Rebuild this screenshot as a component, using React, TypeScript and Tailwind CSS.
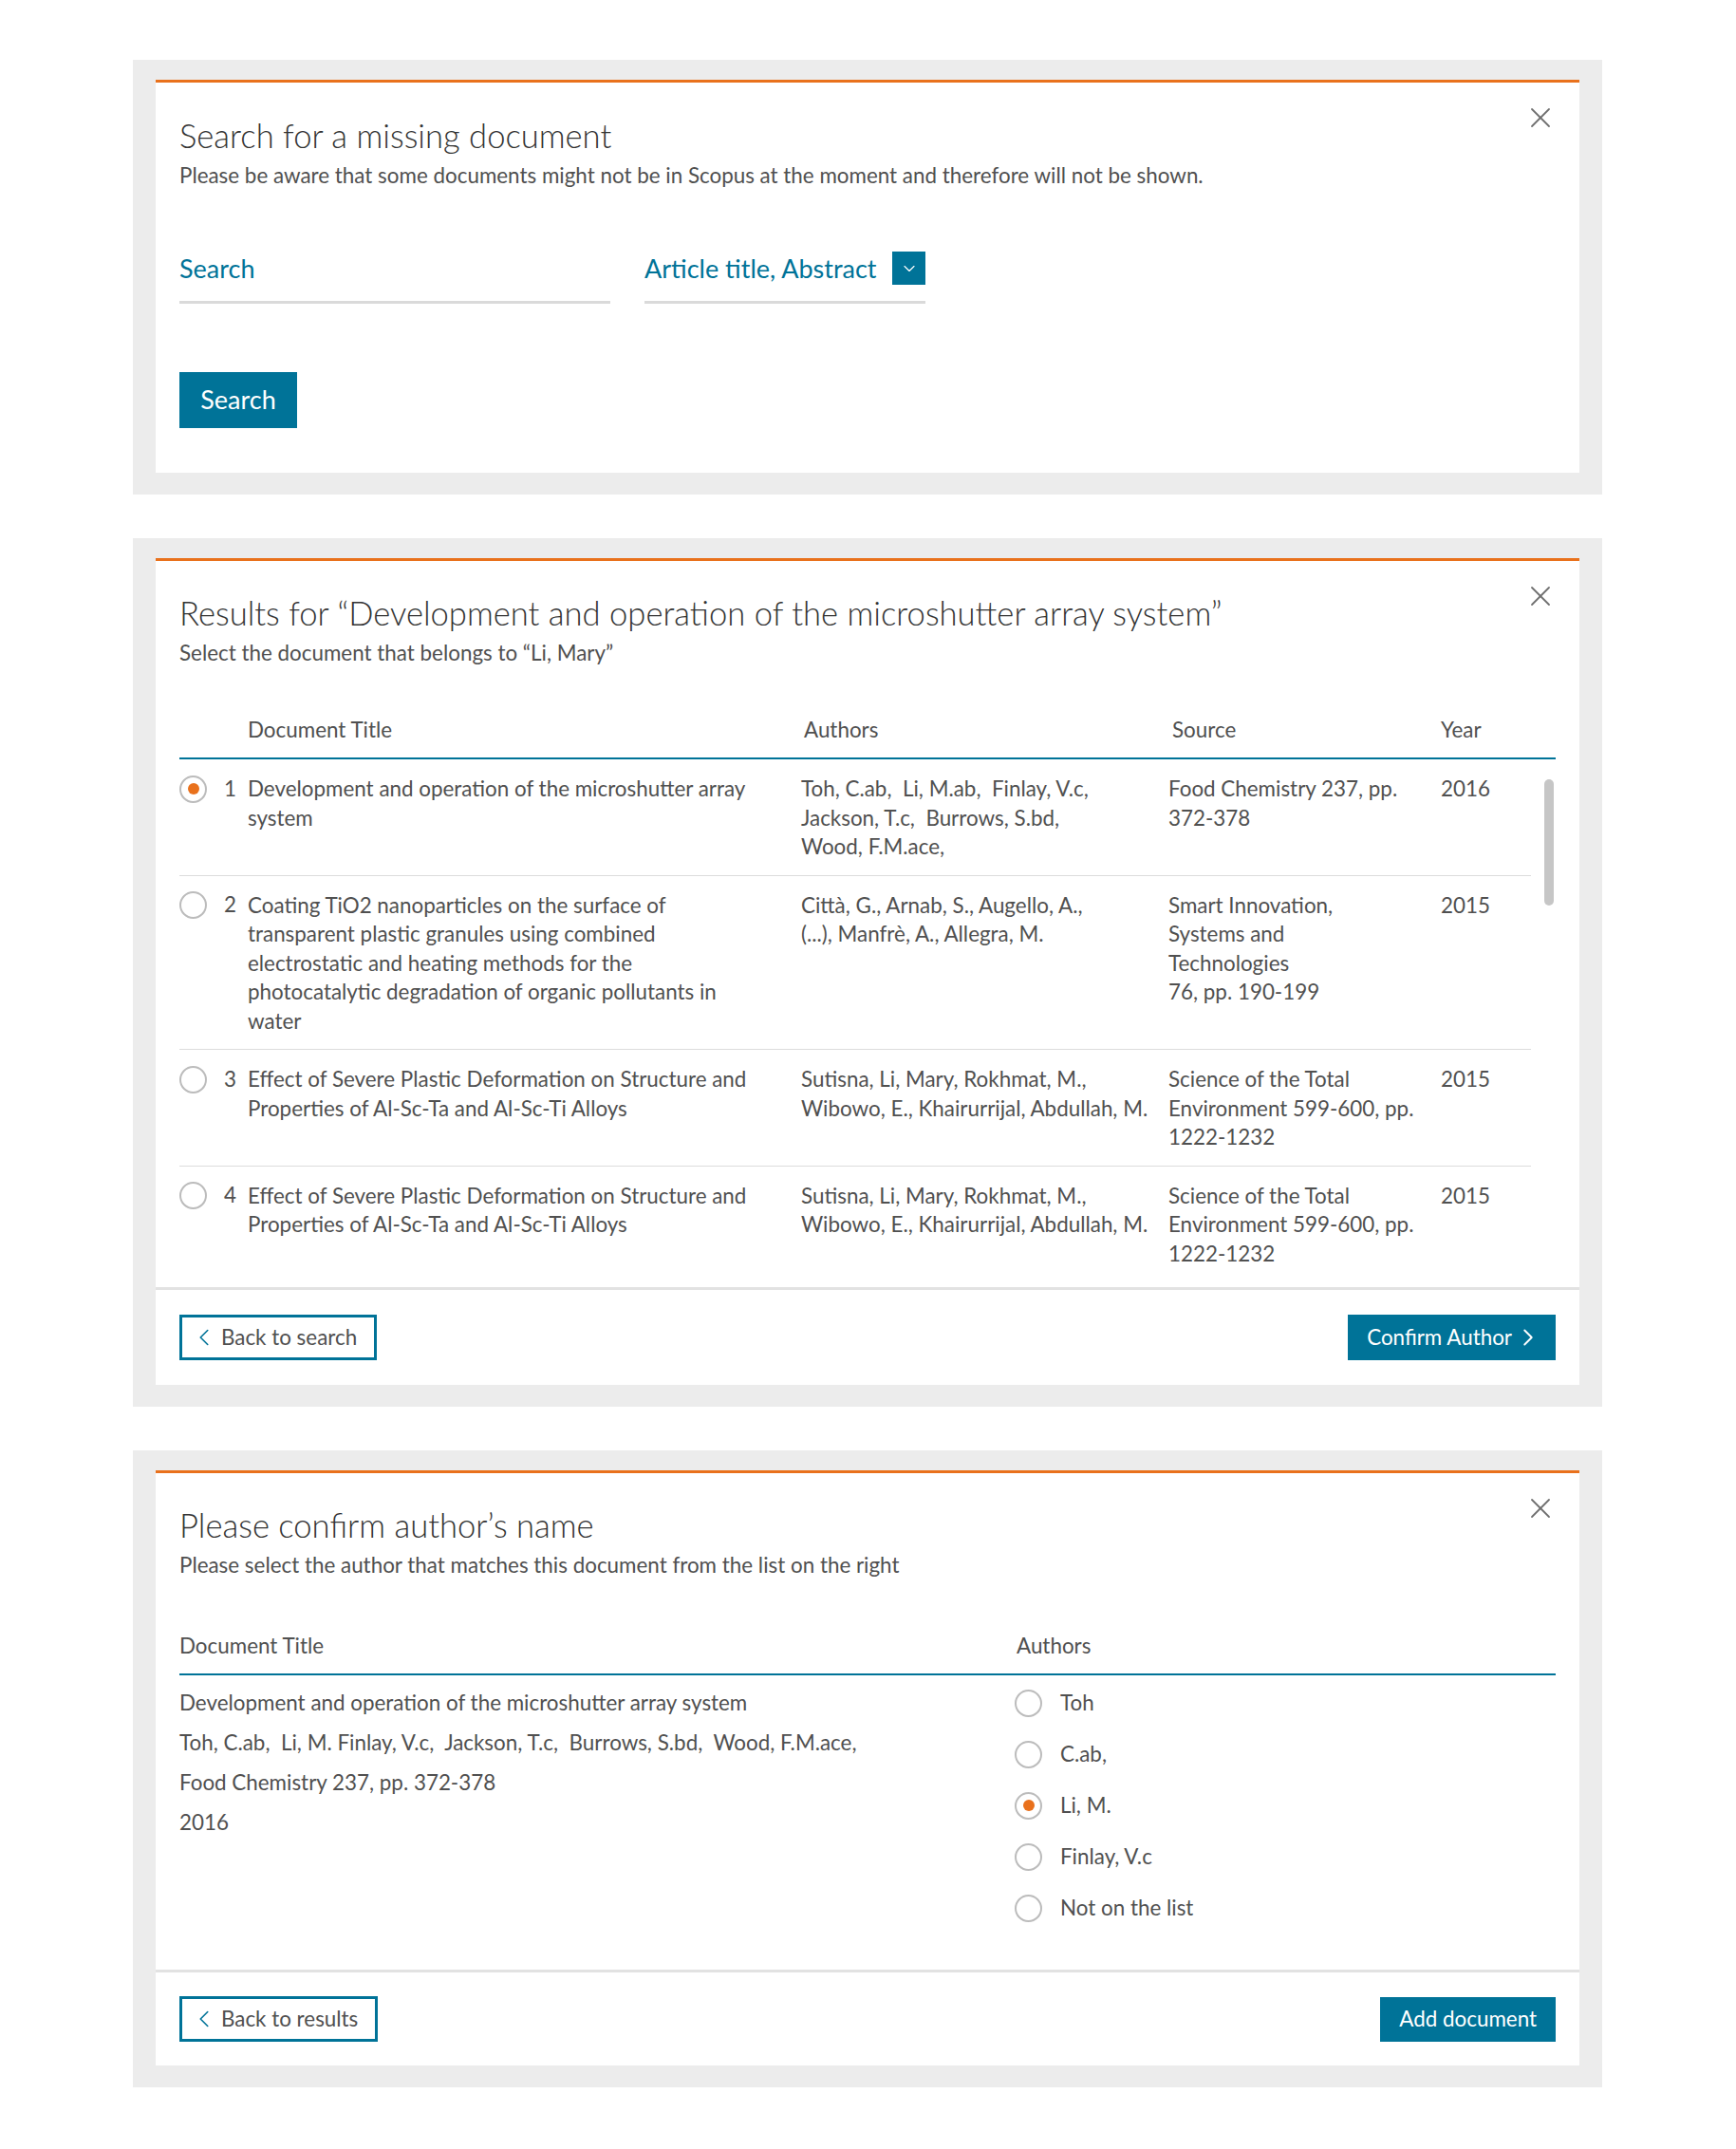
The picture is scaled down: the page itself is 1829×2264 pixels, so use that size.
import { ChevronDown, ChevronLeft, ChevronRight, X } from "lucide-react";
import type { ReactNode } from "react";

const results = [
  {
    n: 1,
    checked: true,
    title: ["Development and operation of the microshutter array", "system"],
    authors: ["Toh, C.ab,  Li, M.ab,  Finlay, V.c,", "Jackson, T.c,  Burrows, S.bd,", "Wood, F.M.ace,"],
    source: ["Food Chemistry 237, pp.", "372-378"],
    year: "2016",
  },
  {
    n: 2,
    checked: false,
    title: [
      "Coating TiO2 nanoparticles on the surface of",
      "transparent plastic granules using combined",
      "electrostatic and heating methods for the",
      "photocatalytic degradation of organic pollutants in",
      "water",
    ],
    authors: ["Città, G., Arnab, S., Augello, A.,", "(...), Manfrè, A., Allegra, M."],
    source: ["Smart Innovation,", "Systems and", "Technologies", "76, pp. 190-199"],
    year: "2015",
  },
  {
    n: 3,
    checked: false,
    title: ["Effect of Severe Plastic Deformation on Structure and", "Properties of Al-Sc-Ta and Al-Sc-Ti Alloys"],
    authors: ["Sutisna, Li, Mary, Rokhmat, M.,", "Wibowo, E., Khairurrijal, Abdullah, M."],
    source: ["Science of the Total", "Environment 599-600, pp.", "1222-1232"],
    year: "2015",
  },
  {
    n: 4,
    checked: false,
    title: ["Effect of Severe Plastic Deformation on Structure and", "Properties of Al-Sc-Ta and Al-Sc-Ti Alloys"],
    authors: ["Sutisna, Li, Mary, Rokhmat, M.,", "Wibowo, E., Khairurrijal, Abdullah, M."],
    source: ["Science of the Total", "Environment 599-600, pp.", "1222-1232"],
    year: "2015",
  },
];

const authorChoices = [
  { name: "Toh", checked: false },
  { name: "C.ab,", checked: false },
  { name: "Li, M.", checked: true },
  { name: "Finlay, V.c", checked: false },
  { name: "Not on the list", checked: false },
];

const Radio = ({ checked }: { checked?: boolean }) => (
  <span className="flex h-[29px] w-[29px] shrink-0 items-center justify-center rounded-full border-2 border-[#bcbcbc] bg-white">
    {checked && <span className="h-[12px] w-[12px] rounded-full bg-[#e9711c]" />}
  </span>
);

const Lines = ({ lines }: { lines: string[] }) => (
  <div className="whitespace-pre">
    {lines.map((l, i) => (
      <div key={i}>{l}</div>
    ))}
  </div>
);

const Panel = ({ children }: { children: ReactNode }) => (
  <div className="bg-[#ececec] px-6 pt-[21px] pb-[23px]">
    <div className="relative border-t-[3px] border-[#e9711c] bg-white">
      <button className="absolute right-[23px] top-[19px] text-[#6e6e6e]">
        <X size={36} strokeWidth={1.2} />
      </button>
      {children}
    </div>
  </div>
);

const Heading = ({ title, sub }: { title: string; sub: string }) => (
  <div>
    <h2 className="text-[34.6px] font-light leading-[40px] text-[#333333]">{title}</h2>
    <p className="mt-[7px] text-[22.4px] leading-[30px] text-[#505050]">{sub}</p>
  </div>
);

const OutlineButton = ({ label }: { label: string }) => (
  <button className="flex h-[48px] items-center gap-[3px] border-[3px] border-[#007398] pl-[8px] pr-[18px] text-[22.4px] text-[#505050]">
    <ChevronLeft size={30} strokeWidth={1.3} className="text-[#007398]" />
    {label}
  </button>
);

export default function App() {
  return (
    <div className="flex min-h-screen flex-col gap-[46px] bg-white pt-[63px] pb-[65px] pl-[140px] pr-[141px] font-['Lato','Noto_Sans',sans-serif]">
      {/* search for a missing document */}
      <Panel>
        <div className="px-[25px] pt-[36px] pb-[47px]">
          <Heading
            title="Search for a missing document"
            sub="Please be aware that some documents might not be in Scopus at the moment and therefore will not be shown."
          />
          <div className="mt-[65px] flex gap-[36px]">
            <div className="flex h-[55px] w-[454px] items-start border-b-[3px] border-[#dadada]">
              <span className="text-[27px] leading-[35px] text-[#007398]">Search</span>
            </div>
            <div className="flex h-[55px] w-[296px] items-start justify-between border-b-[3px] border-[#dadada]">
              <span className="text-[27px] leading-[35px] text-[#007398]">Article title, Abstract</span>
              <span className="flex h-[35px] w-[35px] items-center justify-center bg-[#007398] text-white">
                <ChevronDown size={20} strokeWidth={1.4} />
              </span>
            </div>
          </div>
          <button className="mt-[72px] h-[59px] w-[124px] bg-[#007398] text-[27px] text-white">Search</button>
        </div>
      </Panel>

      {/* results */}
      <Panel>
        <div className="px-[25px] pt-[35px]">
          <Heading
            title="Results for “Development and operation of the microshutter array system”"
            sub="Select the document that belongs to “Li, Mary”"
          />
          <div className="mt-[51px] grid grid-cols-[72px_583px_387px_287px_1fr] border-b-2 border-[#007398] pb-[14px] text-[22.4px] leading-[30px] text-[#505050]">
            <span />
            <span>Document Title</span>
            <span className="pl-[3px]">Authors</span>
            <span className="pl-[4px]">Source</span>
            <span>Year</span>
          </div>
          <div className="relative h-[556px] overflow-hidden pr-[26px]">
            {results.map((r, i) => (
              <div
                key={r.n}
                className={`grid grid-cols-[72px_583px_387px_287px_1fr] pt-[16px] pb-[14px] text-[22.4px] leading-[30.5px] text-[#505050] ${
                  i < results.length - 1 ? "border-b border-[#dcdcdc]" : ""
                }`}
              >
                <div className="flex h-[30px] items-center gap-[18px]">
                  <Radio checked={r.checked} />
                  <span>{r.n}</span>
                </div>
                <Lines lines={r.title} />
                <Lines lines={r.authors} />
                <Lines lines={r.source} />
                <span>{r.year}</span>
              </div>
            ))}
            <div className="absolute right-[2px] top-[21px] h-[133px] w-[10px] rounded-full bg-[#c6c6c6]" />
          </div>
        </div>
        <div className="flex items-center justify-between border-t-[3px] border-[#e2e2e2] px-[25px] pt-[26px] pb-[26px]">
          <OutlineButton label="Back to search" />
          <button className="flex h-[48px] items-center gap-[2px] bg-[#007398] pl-[20px] pr-[14px] text-[22.4px] text-white">
            Confirm Author
            <ChevronRight size={30} strokeWidth={1.5} />
          </button>
        </div>
      </Panel>

      {/* confirm author */}
      <Panel>
        <div className="px-[25px] pt-[35px]">
          <Heading
            title="Please confirm author’s name"
            sub="Please select the author that matches this document from the list on the right"
          />
          <div className="mt-[55px] grid grid-cols-[880px_1fr] border-b-2 border-[#007398] pb-[14px] text-[22.4px] leading-[30px] text-[#505050]">
            <span>Document Title</span>
            <span className="pl-[2px]">Authors</span>
          </div>
          <div className="grid grid-cols-[880px_1fr] pt-[14px] pb-[50px] text-[22.4px] leading-[30px] text-[#505050]">
            <div className="flex flex-col gap-[12px] whitespace-pre">
              <span>Development and operation of the microshutter array system</span>
              <span>Toh, C.ab,  Li, M. Finlay, V.c,  Jackson, T.c,  Burrows, S.bd,  Wood, F.M.ace,</span>
              <span>Food Chemistry 237, pp. 372-378</span>
              <span>2016</span>
            </div>
            <div className="flex flex-col gap-[24px]">
              {authorChoices.map((a) => (
                <label key={a.name} className="flex h-[30px] items-center gap-[19px]">
                  <Radio checked={a.checked} />
                  <span>{a.name}</span>
                </label>
              ))}
            </div>
          </div>
        </div>
        <div className="flex items-center justify-between border-t-[3px] border-[#e2e2e2] px-[25px] pt-[25px] pb-[25px]">
          <OutlineButton label="Back to results" />
          <button className="h-[47px] bg-[#007398] px-[20px] text-[22.4px] text-white">Add document</button>
        </div>
      </Panel>
    </div>
  );
}
